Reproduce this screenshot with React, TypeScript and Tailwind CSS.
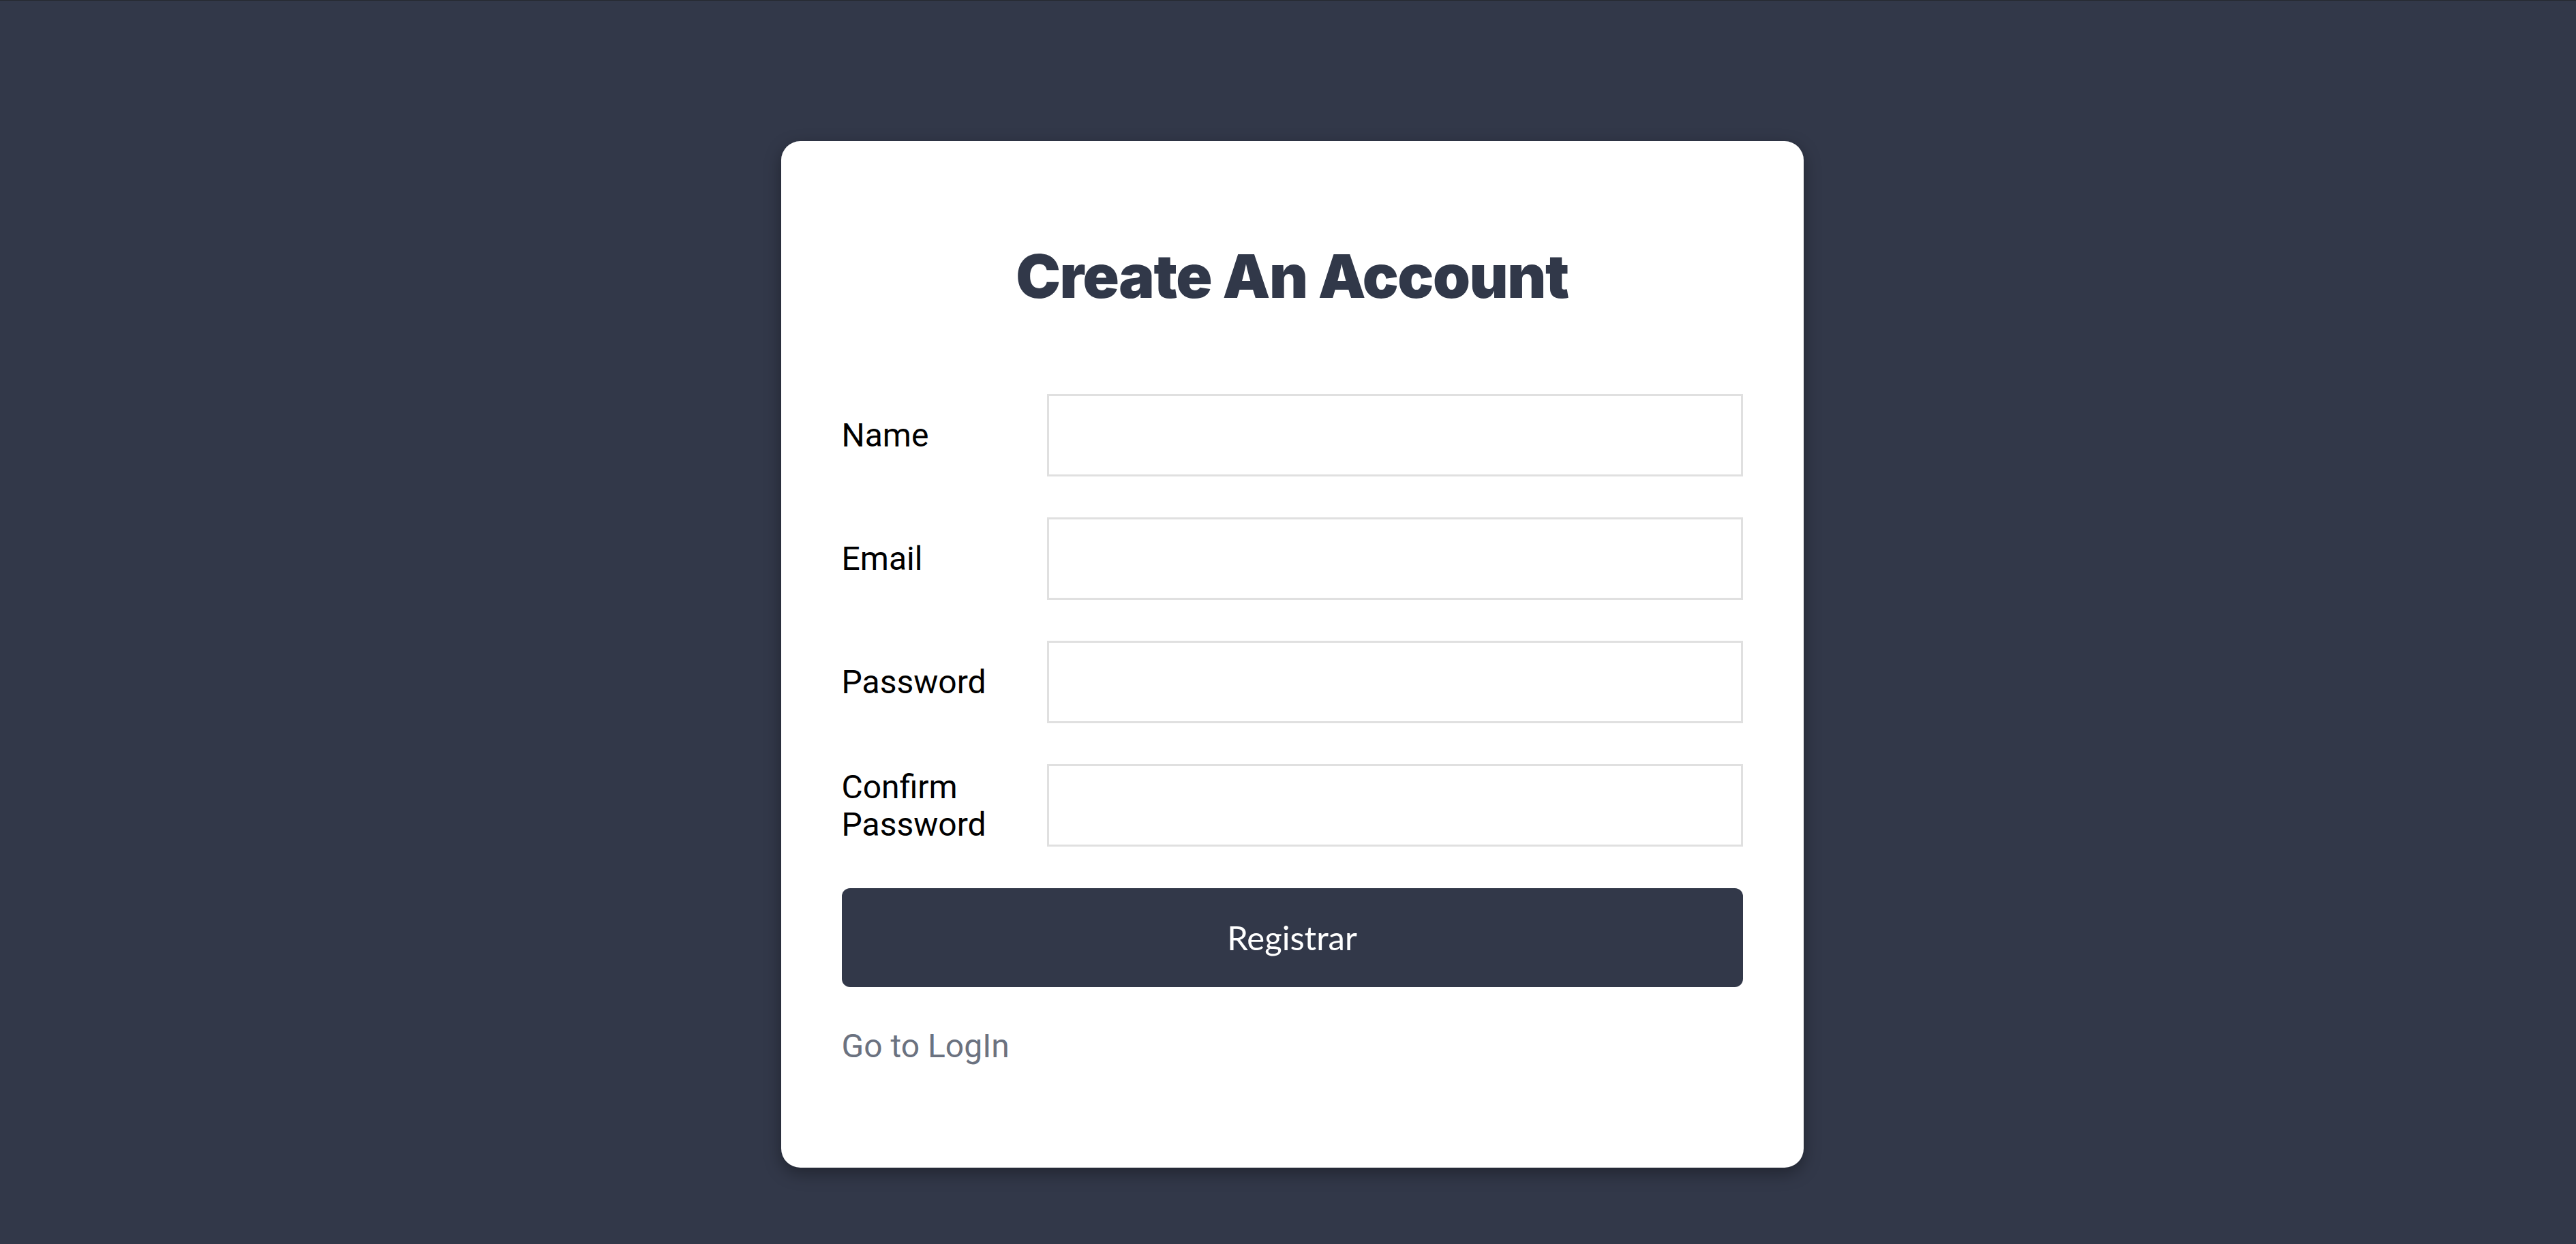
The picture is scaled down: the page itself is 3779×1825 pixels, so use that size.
import { useState } from 'react';

const fields = [
  { id: 'name', label: 'Name', type: 'text' },
  { id: 'email', label: 'Email', type: 'email' },
  { id: 'password', label: 'Password', type: 'password' },
  { id: 'confirm', label: 'Confirm Password', type: 'password' },
];

const App = () => {
  const [values, setValues] = useState<Record<string, string>>({});

  return (
    <div className="min-h-screen bg-[#323849] border-t border-[#25282f] pt-[206px] pb-[104px]">
      <div className="w-[1500px] mx-auto translate-x-[6px] bg-white rounded-[28px] shadow-[0_8px_24px_rgba(0,0,0,0.35)] px-[89px] pt-[143px] pb-[151px]">
        <h1 className="text-center text-[88px] leading-[110px] font-black tracking-[-1.4px] text-[#313849] font-['Inter','Lato',sans-serif]">
          Create An Account
        </h1>

        <form
          className="mt-[118px] flex flex-col gap-[60px]"
          onSubmit={(e) => e.preventDefault()}
        >
          {fields.map((f) => (
            <div key={f.id} className="flex items-center">
              <label
                htmlFor={f.id}
                className="w-[301px] shrink-0 pr-4 text-[48px] leading-[55px] text-black font-['Roboto','Liberation_Sans',sans-serif]"
              >
                {f.label}
              </label>
              <input
                id={f.id}
                type={f.type}
                value={values[f.id] || ''}
                onChange={(e) => setValues({ ...values, [f.id]: e.target.value })}
                className="flex-1 h-[121px] border-[3px] border-[#e0e0e0] bg-white px-6 text-[44px] outline-none"
              />
            </div>
          ))}

          <button
            type="submit"
            className="mt-[1px] h-[145px] w-full rounded-[12px] bg-[#323849] text-white text-[49px] font-normal font-['Lato','Open_Sans',sans-serif]"
          >
            Registrar
          </button>
        </form>

        <a
          href="#"
          className="block mt-[59px] text-[48px] leading-[55px] text-[#6b7280] font-['Roboto','Liberation_Sans',sans-serif]"
        >
          Go to LogIn
        </a>
      </div>
    </div>
  );
};

export default App;
